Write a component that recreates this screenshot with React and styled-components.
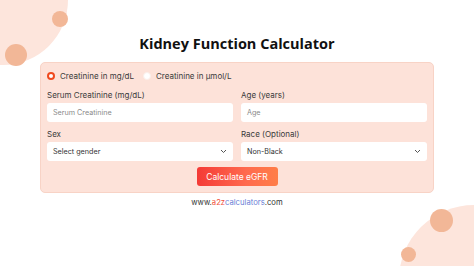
import React from 'react';
import styled, { createGlobalStyle } from 'styled-components';

const GlobalStyle = createGlobalStyle`
  html, body {
    margin: 0;
    padding: 0;
    background: #ffffff;
  }
  * { box-sizing: border-box; }
`;

const Page = styled.div`
  position: relative;
  width: 474px;
  height: 266px;
  overflow: hidden;
  background: #ffffff;
  font-family: Inter, "Noto Sans", sans-serif;
  display: flex;
  flex-direction: column;
  align-items: center;
  padding-top: 34px;
`;

const Blob = styled.div`
  position: absolute;
  border-radius: 50%;
  background: ${p => p.$dark ? '#f2b797' : '#fde5dc'};
  left: ${p => p.$x}px;
  top: ${p => p.$y}px;
  width: ${p => p.$size}px;
  height: ${p => p.$size}px;
`;

const Title = styled.h1`
  position: relative;
  margin: 0;
  font-family: "Open Sans", sans-serif;
  font-weight: 700;
  font-size: 14.5px;
  line-height: 20px;
  color: #111111;
`;

const Card = styled.form`
  position: relative;
  margin-top: 8px;
  width: 394px;
  background: #fde2d9;
  border: 1px solid #f8d3c6;
  border-radius: 5px;
  padding: 6px 6px 6px 6px;
  display: flex;
  flex-direction: column;
`;

const RadioRow = styled.div`
  display: flex;
  align-items: center;
  gap: 9px;
  height: 14px;
  margin-bottom: 6px;
`;

const RadioLabel = styled.label`
  display: flex;
  align-items: center;
  gap: 5px;
  font-size: 8px;
  color: #3a3a3a;
`;

const RadioDot = styled.span`
  width: 8px;
  height: 8px;
  border-radius: 50%;
  background: #ffffff;
  border: ${p => p.$checked ? '2px solid #f04a1e' : '1px solid #fbeee9'};
`;

const Grid = styled.div`
  display: grid;
  grid-template-columns: 1fr 1fr;
  column-gap: 8px;
  row-gap: 6px;
`;

const Field = styled.div`
  display: flex;
  flex-direction: column;
  gap: 2px;
`;

const Label = styled.span`
  font-size: 8px;
  line-height: 12px;
  color: #3a3a3a;
`;

const Input = styled.div`
  height: 19px;
  background: #ffffff;
  border-radius: 3px;
  display: flex;
  align-items: center;
  justify-content: space-between;
  padding: 0 6px;
  font-size: 7.2px;
  color: ${p => p.$placeholder ? '#8a8a8a' : '#333333'};
`;

const Chevron = () => (
  <svg width="7" height="5" viewBox="0 0 7 5">
    <path d="M1 1l2.5 2.5L6 1" fill="none" stroke="#555" strokeWidth="1" />
  </svg>
);

const ButtonRow = styled.div`
  display: flex;
  justify-content: center;
  margin-top: 6px;
`;

const Button = styled.button`
  width: 81px;
  height: 19px;
  border: none;
  border-radius: 3px;
  background: linear-gradient(90deg, #f43a36 0%, #ff6a4e 60%, #ff7e48 100%);
  color: #ffffff;
  font-family: Inter, sans-serif;
  font-size: 8.5px;
  padding: 0;
`;

const Site = styled.div`
  position: relative;
  margin-top: 5px;
  font-size: 7.7px;
  color: #333333;
`;

const Red = styled.span`color: #f0503a;`;
const Blue = styled.span`color: #6b7fd6;`;

export default function App() {
  return (
    <>
      <GlobalStyle />
      <Page>
        <Blob $x={-62} $y={-65} $size={130} />
        <Blob $dark $x={52} $y={11} $size={16} />
        <Blob $dark $x={5} $y={44} $size={22} />
        <Blob $x={399} $y={205} $size={150} />
        <Blob $dark $x={430} $y={209} $size={23} />
        <Blob $dark $x={401} $y={247} $size={15} />

        <Title>Kidney Function Calculator</Title>
        <Card>
          <RadioRow>
            <RadioLabel><RadioDot $checked />Creatinine in mg/dL</RadioLabel>
            <RadioLabel><RadioDot />Creatinine in µmol/L</RadioLabel>
          </RadioRow>
          <Grid>
            <Field>
              <Label>Serum Creatinine (mg/dL)</Label>
              <Input $placeholder>Serum Creatinine</Input>
            </Field>
            <Field>
              <Label>Age (years)</Label>
              <Input $placeholder>Age</Input>
            </Field>
            <Field>
              <Label>Sex</Label>
              <Input>Select gender<Chevron /></Input>
            </Field>
            <Field>
              <Label>Race (Optional)</Label>
              <Input>Non-Black<Chevron /></Input>
            </Field>
          </Grid>
          <ButtonRow>
            <Button type="button">Calculate eGFR</Button>
          </ButtonRow>
        </Card>
        <Site>www.<Red>a2z</Red><Blue>calculators</Blue>.com</Site>
      </Page>
    </>
  );
}
